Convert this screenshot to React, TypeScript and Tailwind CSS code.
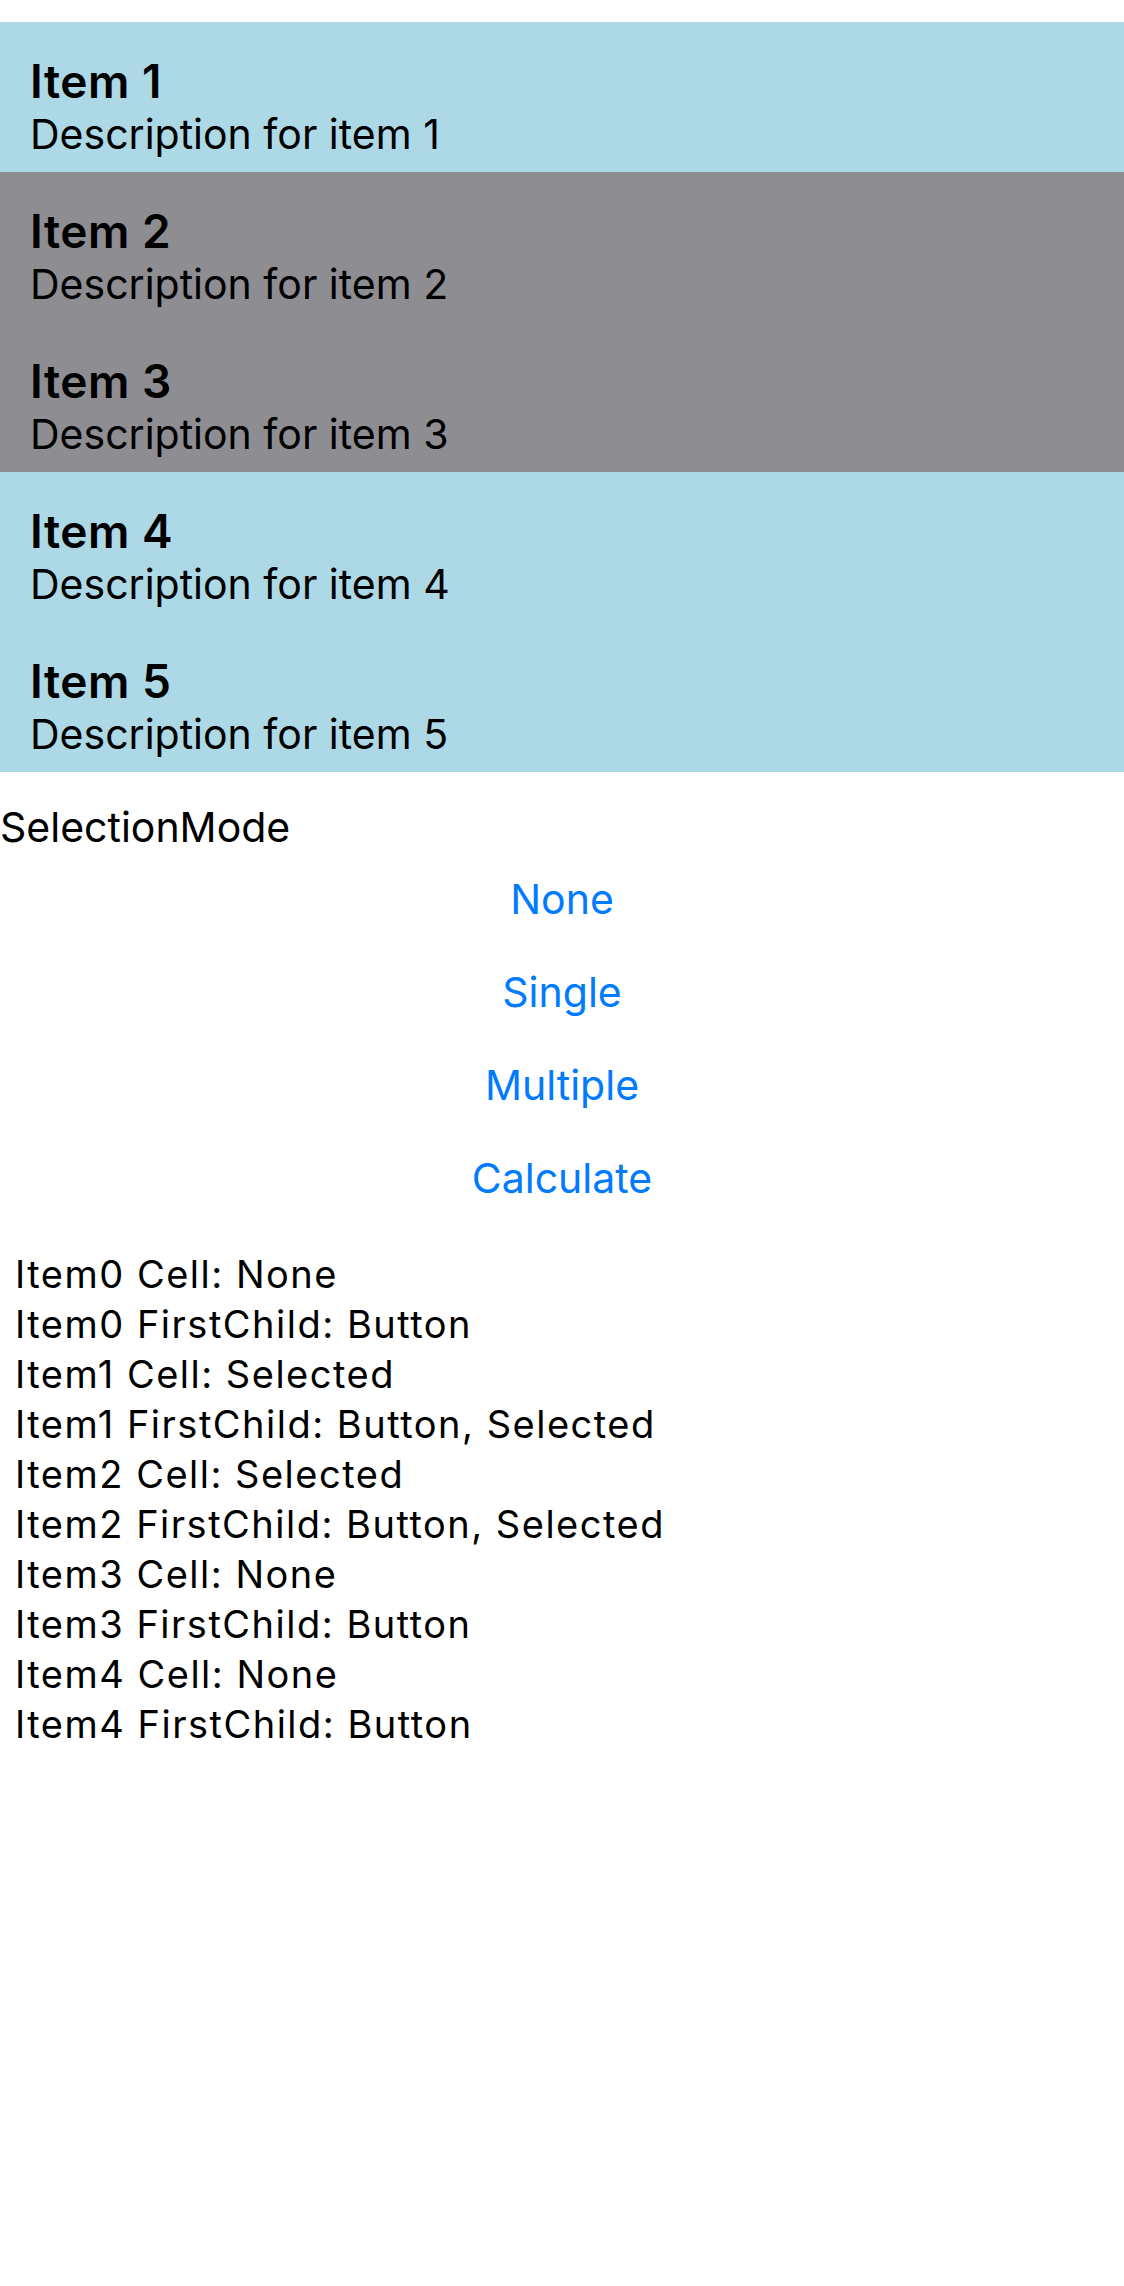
import { useState } from "react";

const items = [1, 2, 3, 4, 5].map((n) => ({
  title: `Item ${n}`,
  description: `Description for item ${n}`,
}));

const modes = ["None", "Single", "Multiple"];

const results = [
  "Item0 Cell: None",
  "Item0 FirstChild: Button",
  "Item1 Cell: Selected",
  "Item1 FirstChild: Button, Selected",
  "Item2 Cell: Selected",
  "Item2 FirstChild: Button, Selected",
  "Item3 Cell: None",
  "Item3 FirstChild: Button",
  "Item4 Cell: None",
  "Item4 FirstChild: Button",
];

export default function App() {
  const [selected] = useState<number[]>([1, 2]);

  return (
    <div className="min-h-[2286px] bg-white pt-[22px] text-black font-['Inter','Liberation_Sans',sans-serif]">
      <div className="flex flex-col">
        {items.map((item, i) => (
          <div
            key={item.title}
            className={`h-[150px] pt-[32px] pl-[30px] ${selected.includes(i) ? "bg-[#8e8d92]" : "bg-[#add8e6]"}`}
          >
            <div className="text-[46px] leading-[54px] font-semibold tracking-[0.5px]">{item.title}</div>
            <div className="text-[41px] leading-[52px]">{item.description}</div>
          </div>
        ))}
      </div>

      <div className="mt-[30px] text-[41px] leading-[50px]">SelectionMode</div>

      <div className="flex flex-col">
        {[...modes, "Calculate"].map((label) => (
          <button
            key={label}
            className="h-[93px] flex items-center justify-center text-[41px] leading-[50px] text-[#007aff]"
          >
            {label}
          </button>
        ))}
      </div>

      <div className="mt-[25px] pl-[15px] flex flex-col">
        {results.map((line) => (
          <div key={line} className="text-[38px] leading-[50px] tracking-[1.5px]">
            {line}
          </div>
        ))}
      </div>
    </div>
  );
}
